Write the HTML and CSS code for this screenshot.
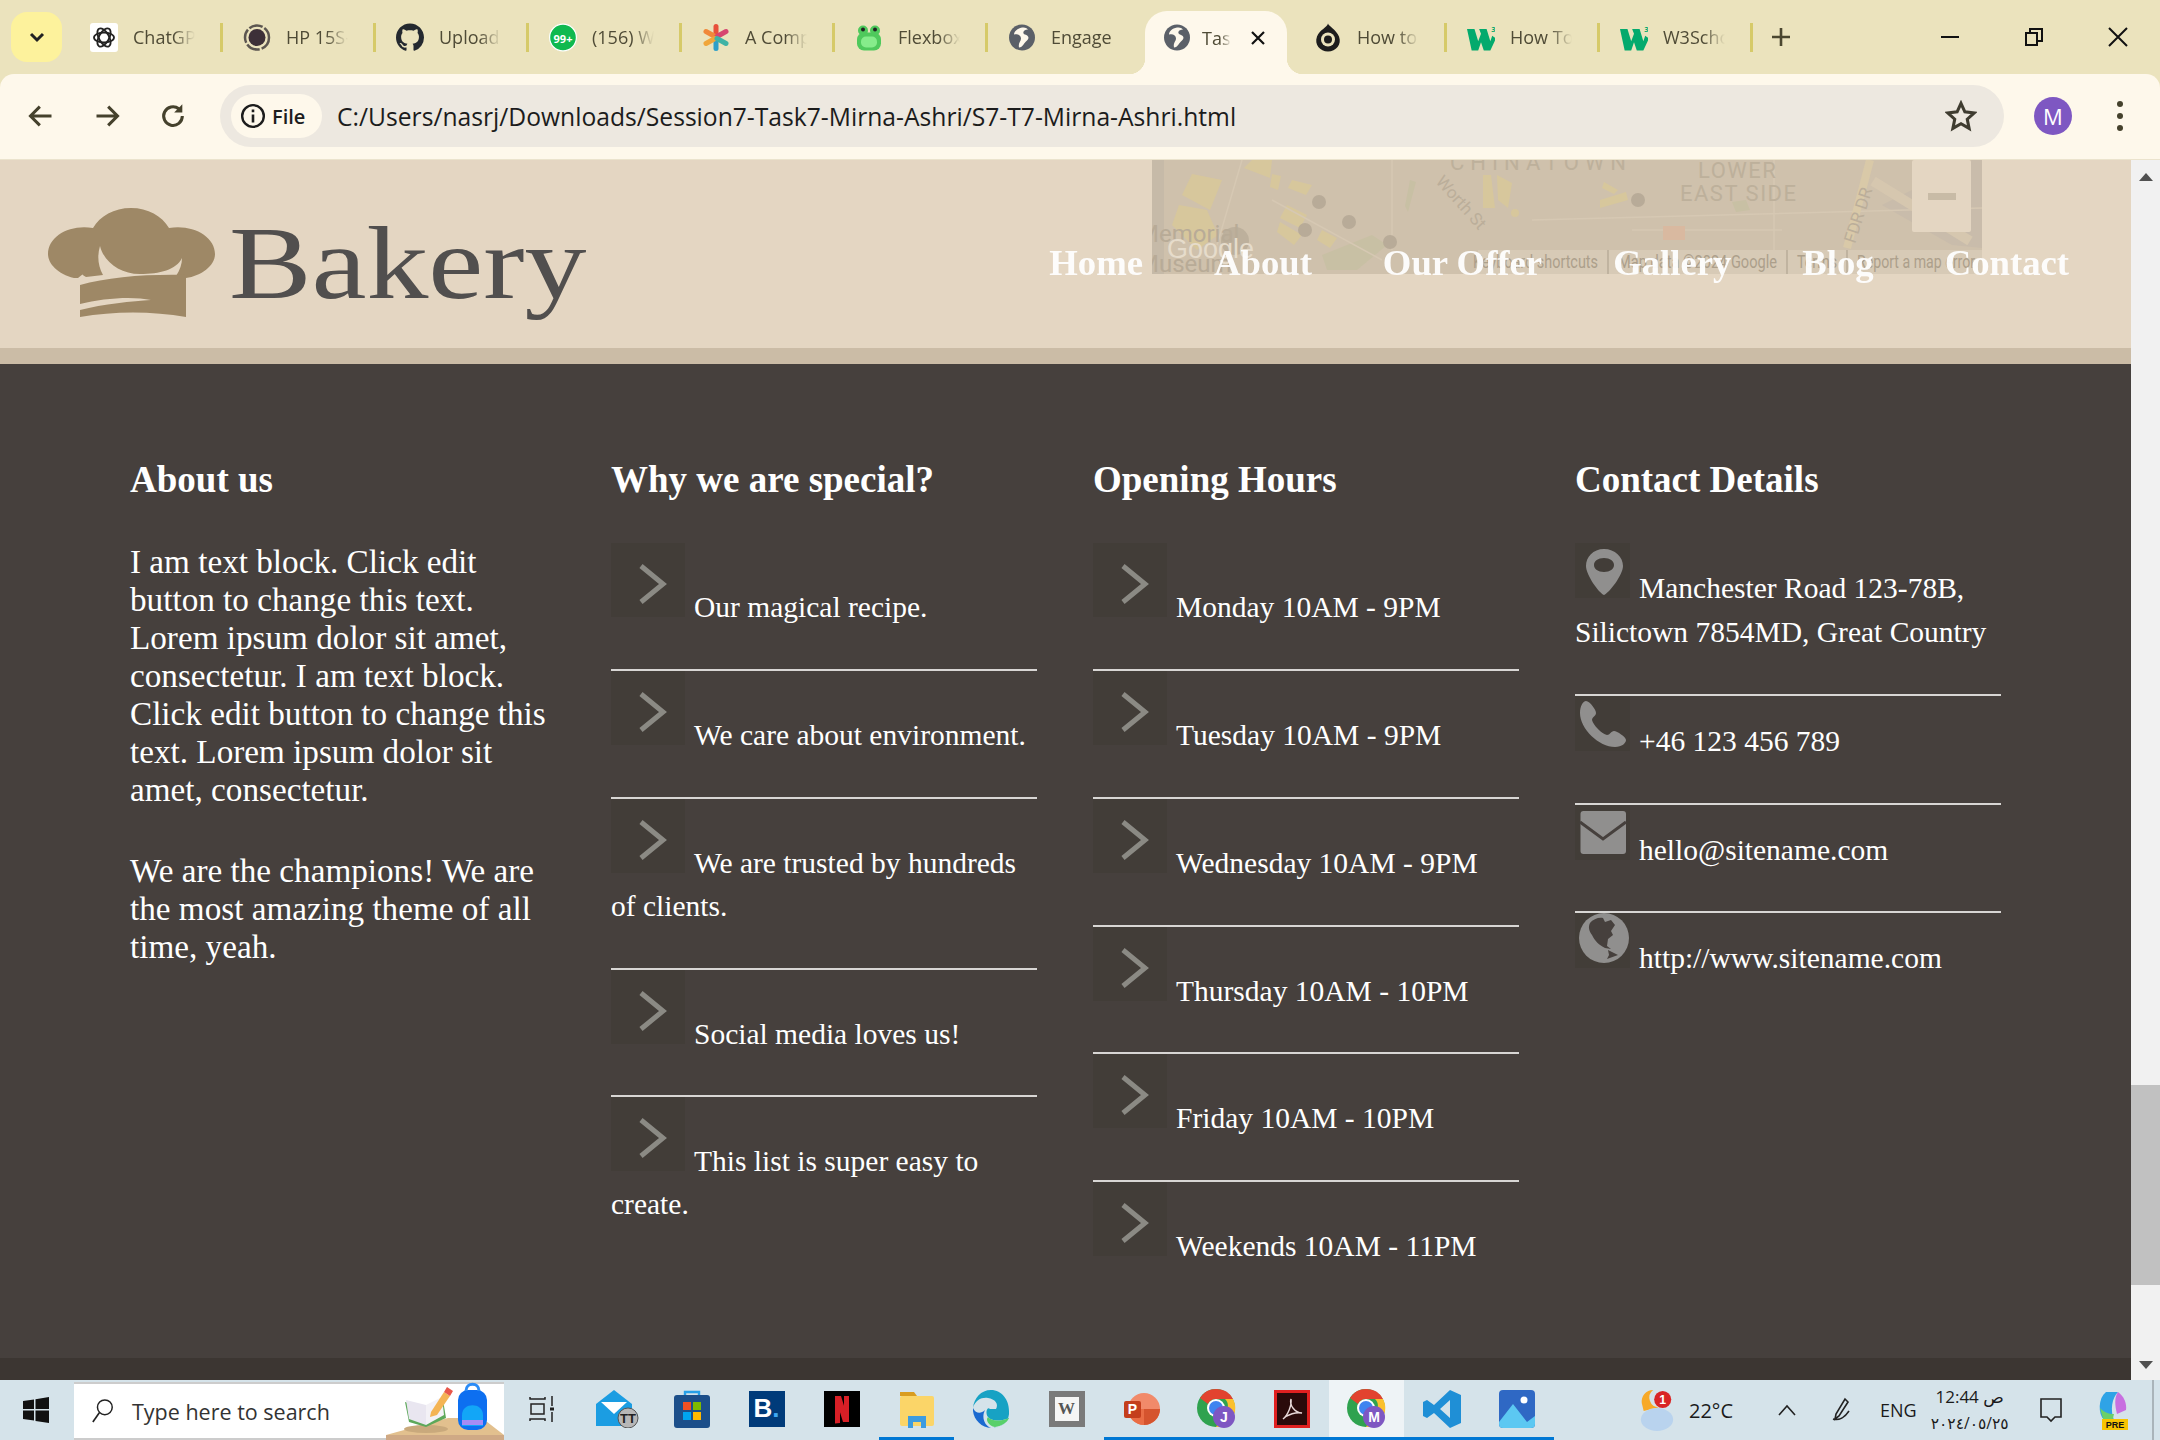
FILE: index.html
```html
<!DOCTYPE html>
<html lang="en">
<head>
    <meta charset="UTF-8">
    <meta name="viewport" content="width=device-width, initial-scale=1.0">
    <title>Task 7</title>
    <link rel="stylesheet" href="styles.css">
</head>
<body>
    <!-- browser tabs -->
    <div class="tabstrip">
        <button class="tab-menu"><svg viewBox="0 0 24 24" width="24" height="24"><path d="M6 9l6 6 6-6" fill="none" stroke="#222" stroke-width="3"/></svg></button>
        <div class="tab">
            <svg class="favicon" viewBox="0 0 28 29"><rect width="28" height="29" fill="#fff" rx="3"/><g fill="none" stroke="#222" stroke-width="1.8"><ellipse cx="14" cy="14.5" rx="10" ry="5"/><ellipse cx="14" cy="14.5" rx="10" ry="5" transform="rotate(60 14 14.5)"/><ellipse cx="14" cy="14.5" rx="10" ry="5" transform="rotate(120 14 14.5)"/></g></svg>
            <span class="tab-title">ChatGPT</span><i class="tab-sep"></i>
        </div>
        <div class="tab">
            <svg class="favicon" viewBox="0 0 28 28"><circle cx="14" cy="14" r="12" fill="none" stroke="#5c5650" stroke-width="2.5" stroke-dasharray="14 2"/><circle cx="14" cy="14" r="8.5" fill="#3d3038"/></svg>
            <span class="tab-title">HP 15S-fq</span><i class="tab-sep"></i>
        </div>
        <div class="tab">
            <svg class="favicon" viewBox="0 0 16 16"><path fill="#24292f" d="M8 0C3.58 0 0 3.58 0 8c0 3.54 2.29 6.53 5.47 7.59.4.07.55-.17.55-.38 0-.19-.01-.82-.01-1.49-2.01.37-2.53-.49-2.69-.94-.09-.23-.48-.94-.82-1.13-.28-.15-.68-.52-.01-.53.63-.01 1.08.58 1.23.82.72 1.21 1.87.87 2.33.66.07-.52.28-.87.51-1.07-1.78-.2-3.64-.89-3.64-3.95 0-.87.31-1.59.82-2.15-.08-.2-.36-1.02.08-2.12 0 0 .67-.21 2.2.82.64-.18 1.32-.27 2-.27.68 0 1.36.09 2 .27 1.53-1.04 2.2-.82 2.2-.82.44 1.1.16 1.92.08 2.12.51.56.82 1.27.82 2.15 0 3.07-1.87 3.75-3.65 3.95.29.25.54.73.54 1.48 0 1.07-.01 1.93-.01 2.2 0 .21.15.46.55.38A8.013 8.013 0 0016 8c0-4.42-3.58-8-8-8z"/></svg>
            <span class="tab-title">Upload files</span><i class="tab-sep"></i>
        </div>
        <div class="tab">
            <svg class="favicon" viewBox="0 0 28 28"><circle cx="14" cy="14" r="13.4" fill="#0fb94f" stroke="#fff" stroke-width="1.2"/><text x="14" y="19" class="badge-text">99+</text></svg>
            <span class="tab-title">(156) WhatsApp</span><i class="tab-sep"></i>
        </div>
        <div class="tab">
            <svg class="favicon" viewBox="0 0 28 28"><g stroke-width="5" stroke-linecap="round"><path d="M14 3v10" stroke="#e8503a"/><path d="M14 15v10" stroke="#2e9fc9"/><path d="M4 8l9 5" stroke="#f0883a"/><path d="M24 8l-9 5" stroke="#d6456f"/><path d="M4 20l9-5" stroke="#f0a63a"/><path d="M24 20l-9-5" stroke="#3fb3a5"/></g></svg>
            <span class="tab-title">A Complete Guide</span><i class="tab-sep"></i>
        </div>
        <div class="tab">
            <svg class="favicon" viewBox="0 0 28 28"><rect x="2" y="9" width="24" height="18" rx="7" fill="#4fc95c"/><circle cx="8" cy="7" r="5" fill="#4fc95c"/><circle cx="20" cy="7" r="5" fill="#4fc95c"/><circle cx="8" cy="6" r="2" fill="#222"/><circle cx="20" cy="6" r="2" fill="#222"/><rect x="6" y="13" width="16" height="11" rx="5" fill="#86ec8b"/></svg>
            <span class="tab-title">Flexbox Froggy</span><i class="tab-sep"></i>
        </div>
        <div class="tab">
            <svg class="favicon" viewBox="0 0 28 28"><use href="#globe-tab"/></svg>
            <span class="tab-title">Engage</span>
        </div>
        <div class="tab tab-active">
            <svg class="favicon" viewBox="0 0 28 28">
                <g id="globe-tab"><circle cx="14" cy="14" r="13" fill="#5b6068"/><path d="M14 4c-5 1-8 4-8 7 4-1 7 1 7 4s-3 4-2 9c4 0 5-5 8-7 3-3 1-5-2-6s-2-5 3-5c-2-2-4-2-6-2z" fill="#fef8eb"/></g>
            </svg>
            <span class="tab-title">Task 7</span>
            <svg class="tab-close" viewBox="0 0 16 16"><path d="M2 2l12 12M14 2L2 14" stroke="#111" stroke-width="2.2"/></svg>
        </div>
        <div class="tab">
            <svg class="favicon" viewBox="0 0 28 28"><path d="M14 0c1 3 8 6 11 13 3 8-3 15-11 15S0 21 3 13C6 6 13 4 14 0z" fill="#1d1d1d"/><circle cx="14" cy="16" r="7" fill="#ebe3bd"/><circle cx="14" cy="16" r="4" fill="#1d1d1d"/></svg>
            <span class="tab-title">How to center</span><i class="tab-sep"></i>
        </div>
        <div class="tab">
            <svg class="favicon" viewBox="0 0 30 28"><use href="#w3-icon"/></svg>
            <span class="tab-title">How To Create</span><i class="tab-sep"></i>
        </div>
        <div class="tab">
            <svg class="favicon" viewBox="0 0 30 28">
                <g id="w3-icon"><path d="M0 5h8l4 13 3-8-2-5h8l4 13 2-6 4 3-6 13h-7l-3-9-3 9H5z" fill="#04aa6d"/><text x="26" y="8" class="w3-sup">3</text></g>
            </svg>
            <span class="tab-title">W3Schools</span><i class="tab-sep"></i>
        </div>
        <svg class="tab-new" viewBox="0 0 20 20"><path d="M10 1v18M1 10h18" stroke="#4b4730" stroke-width="2.6"/></svg>
        <div class="window-controls">
            <svg viewBox="0 0 20 20"><path d="M1 10h18" stroke="#111" stroke-width="2"/></svg>
            <svg viewBox="0 0 20 20"><path d="M2 6h11v12H2zM6 6V2h12v12h-5" fill="none" stroke="#111" stroke-width="2"/></svg>
            <svg viewBox="0 0 20 20"><path d="M1 1l18 18M19 1L1 19" stroke="#111" stroke-width="2"/></svg>
        </div>
    </div>

    <!-- address bar -->
    <div class="toolbar">
        <svg class="tool-btn" viewBox="0 0 24 24"><path d="M21 12H4M11 4l-8 8 8 8" fill="none" stroke="#45412c" stroke-width="2.6"/></svg>
        <svg class="tool-btn" viewBox="0 0 24 24"><path d="M3 12h17M13 4l8 8-8 8" fill="none" stroke="#45412c" stroke-width="2.6"/></svg>
        <svg class="tool-btn" viewBox="0 0 24 24"><path d="M20 12a8 8 0 1 1-3-6.2" fill="none" stroke="#45412c" stroke-width="2.6"/><path d="M20 2v7h-7z" fill="#45412c"/></svg>
        <div class="omnibox">
            <div class="file-chip">
                <svg viewBox="0 0 24 24" width="26" height="26"><circle cx="12" cy="12" r="10" fill="none" stroke="#1d1d1d" stroke-width="2.2"/><path d="M12 10.5V18M12 6v2.6" stroke="#1d1d1d" stroke-width="2.4"/></svg>
                <span>File</span>
            </div>
            <span class="url">C:/Users/nasrj/Downloads/Session7-Task7-Mirna-Ashri/S7-T7-Mirna-Ashri.html</span>
            <svg class="star" viewBox="0 0 24 24"><path d="M12 2.5l2.9 6.4 7 .8-5.2 4.7 1.4 6.9-6.1-3.5-6.1 3.5 1.4-6.9-5.2-4.7 7-.8z" fill="none" stroke="#3f3c30" stroke-width="2.3"/></svg>
        </div>
        <div class="avatar">M</div>
        <div class="kebab"><i></i><i></i><i></i></div>
    </div>

    <div class="viewport">
        <div class="page">
            <header class="site-header">
                <!-- faded map that scrolled under the sticky header -->
                <svg class="map" viewBox="0 0 830 114">
                    <rect width="830" height="114" fill="#cfc1ac"/>
                    <path d="M0 0h12v114H0z" fill="#c6baa8"/>
                    <path d="M730 45L800 85 830 88V0H820z" fill="#c9bcab"/>
                    <g fill="#d7c79c">
                        <path d="M40 14l30 6-12 30-28-15z"/><path d="M27 45l28 5 11 25-21 15-25-25z"/><path d="M100 0h20l-2 18-26-10z"/><path d="M120 14l9 2-3 14-8-3z"/><path d="M140 20l20 5-6 10-18-7z"/><path d="M135 45l20 10-7 13-20-10z"/><path d="M128 62l22 13-8 10-17-13z"/><path d="M170 70l15 8-7 10-13-8z"/><path d="M331 15l8 0 4 33-12 0z"/><path d="M345 15l15 8-4 25-10-8z"/><circle cx="363" cy="53" r="4"/><path d="M448 40l26-8 2 8-28 8zM452 22l14 8-4 4-12-6z"/>
                    </g>
                    <g fill="#c8c0a4">
                        <path d="M258 20l6 2-8 30-3-6zM170 95l50-20 15 10-30 25-30 0zM580 42l14-2 4 10-14 2z"/>
                    </g>
                    <g fill="none" stroke="#d6c8b3" stroke-width="1.5">
                        <path d="M90 0L65 85M240 0v90M380 60L830 48M622 0v90M480 70h150M120 40L230 100"/>
                    </g>
                    <path d="M718 0L695 88" stroke="#d9c9a8" stroke-width="8"/>
                    <path d="M721 21L818 81" stroke="#d6c7af" stroke-width="10"/>
                    <circle cx="83" cy="81" r="14" fill="#bdb09c"/>
                    <g fill="#b8ab98">
                        <circle cx="167" cy="42" r="7"/><circle cx="153" cy="70" r="7"/><circle cx="197" cy="62" r="7"/><circle cx="238" cy="82" r="7"/><circle cx="486" cy="40" r="7"/>
                    </g>
                    <rect x="511" y="66" width="22" height="14" fill="#d9b9a0"/>
                    <text x="298" y="10" class="map-label map-label-wide">CHINATOWN</text>
                    <text x="546" y="18" class="map-label">LOWER</text>
                    <text x="528" y="41" class="map-label">EAST SIDE</text>
                    <text x="283" y="22" class="map-street" transform="rotate(48 283 22)">Worth St</text>
                    <text x="703" y="84" class="map-street" transform="rotate(-72 703 84)">FDR DR</text>
                    <text x="-14" y="82" class="map-place">Memorial</text>
                    <text x="-14" y="112" class="map-place">Museum</text>
                    <text x="15" y="98" class="map-google">Google</text>
                    <rect x="326" y="90" width="504" height="24" fill="#d7cab6"/>
                    <g class="map-small">
                        <text x="321" y="108" textLength="125" lengthAdjust="spacingAndGlyphs">Keyboard shortcuts</text>
                        <text x="466" y="108" textLength="159" lengthAdjust="spacingAndGlyphs">Map data ©2024 Google</text>
                        <text x="645" y="108" textLength="40" lengthAdjust="spacingAndGlyphs">Terms</text>
                        <text x="705" y="108" textLength="118" lengthAdjust="spacingAndGlyphs">Report a map error</text>
                    </g>
                    <path d="M456 90v24M635 90v24M695 90v24" stroke="#a99d8a" stroke-width="1"/>
                    <rect x="760" y="0" width="59" height="72" rx="2" fill="#e4d6c2"/>
                    <rect x="776" y="33" width="28" height="7" fill="#c8bba6"/>
                </svg>
                <div class="logo">
                    <svg class="logo-hat" viewBox="0 0 167 109">
                        <path fill="#9e8866" d="M83 0C66 0 52 8 45 20C22 16 0 28 0 46C0 56 10 66 26 70L30 70L35 66C30 60 27 55 26 50C28 58 32 66 38 69L55 67C50 58 49 48 52 38C56 54 72 66 92 66C112 66 128 62 134 50C134 56 132 62 128 68L138 70C153 68 167 58 167 46C167 28 144 16 121 20C114 8 100 0 83 0Z"/>
                        <path fill="#9e8866" d="M32 77C60 69 100 66 138 67V109C104 103 66 103 32 109V102C55 96 85 93 103 92C85 88 55 90 32 96Z"/>
                    </svg>
                    <span class="logo-text">Bakery</span>
                </div>
                <nav class="main-nav">
                    <a href="#">Home</a>
                    <a href="#">About</a>
                    <a href="#">Our Offer</a>
                    <a href="#">Gallery</a>
                    <a href="#">Blog</a>
                    <a href="#">Contact</a>
                </nav>
            </header>
            <div class="header-band"></div>

            <footer class="site-footer">
                <div class="footer-grid">
                    <section>
                        <h3>About us</h3>
                        <p>I am text block. Click edit button to change this text. Lorem ipsum dolor sit amet, consectetur. I am text block. Click edit button to change this text. Lorem ipsum dolor sit amet, consectetur.</p>
                        <p>We are the champions! We are the most amazing theme of all time, yeah.</p>
                    </section>
                    <section>
                        <h3>Why we are special?</h3>
                        <ul class="arrow-list">
                            <li><svg class="arrow-icon" viewBox="0 0 74 74"><path d="M30 23l22 18-22 18"/></svg>Our magical recipe.</li>
                            <li><svg class="arrow-icon" viewBox="0 0 74 74"><path d="M30 23l22 18-22 18"/></svg>We care about environment.</li>
                            <li><svg class="arrow-icon" viewBox="0 0 74 74"><path d="M30 23l22 18-22 18"/></svg>We are trusted by hundreds of clients.</li>
                            <li><svg class="arrow-icon" viewBox="0 0 74 74"><path d="M30 23l22 18-22 18"/></svg>Social media loves us!</li>
                            <li><svg class="arrow-icon" viewBox="0 0 74 74"><path d="M30 23l22 18-22 18"/></svg>This list is super easy to create.</li>
                        </ul>
                    </section>
                    <section>
                        <h3>Opening Hours</h3>
                        <ul class="arrow-list">
                            <li><svg class="arrow-icon" viewBox="0 0 74 74"><path d="M30 23l22 18-22 18"/></svg>Monday 10AM - 9PM</li>
                            <li><svg class="arrow-icon" viewBox="0 0 74 74"><path d="M30 23l22 18-22 18"/></svg>Tuesday 10AM - 9PM</li>
                            <li><svg class="arrow-icon" viewBox="0 0 74 74"><path d="M30 23l22 18-22 18"/></svg>Wednesday 10AM - 9PM</li>
                            <li><svg class="arrow-icon" viewBox="0 0 74 74"><path d="M30 23l22 18-22 18"/></svg>Thursday 10AM - 10PM</li>
                            <li><svg class="arrow-icon" viewBox="0 0 74 74"><path d="M30 23l22 18-22 18"/></svg>Friday 10AM - 10PM</li>
                            <li><svg class="arrow-icon" viewBox="0 0 74 74"><path d="M30 23l22 18-22 18"/></svg>Weekends 10AM - 11PM</li>
                        </ul>
                    </section>
                    <section>
                        <h3>Contact Details</h3>
                        <ul class="contact-list">
                            <li><svg class="contact-icon" viewBox="0 0 55 55"><path fill-rule="evenodd" d="M29 6C18 6 11 14 11 23C11 32 24 50 29 52C34 50 48 32 48 23C48 14 40 6 29 6ZM29 15C35 15 39 18 39 22C39 26 35 29 29 29C23 29 19 26 19 22C19 18 23 15 29 15Z"/></svg>Manchester Road 123-78B, Silictown 7854MD, Great Country</li>
                            <li><svg class="contact-icon" viewBox="0 0 55 55"><path d="M11 5C8 5 5 10 5 17C5 33 24 51 40 51C47 51 51 47 51 44C51 41 42 35 39 35C36 35 35 39 32 39C27 38 18 29 17 24C17 21 21 20 21 17C21 14 15 5 11 5Z"/></svg>+46 123 456 789</li>
                            <li><svg class="contact-icon" viewBox="0 0 55 55"><rect x="5.5" y="6" width="45.5" height="43" rx="3"/><path d="M5 17l23 17 23-17" fill="none" stroke="#46403d" stroke-width="3"/></svg>hello@sitename.com</li>
                            <li><svg class="contact-icon" viewBox="0 0 55 55"><circle cx="29" cy="25" r="25"/><path fill="#46403d" d="M15 10C18 6 24 4 28 5L30 9L36 7L40 12L36 18L38 22L33 26L32 33L36 36L30 35C24 32 20 28 17 22C14 18 13 14 15 10ZM33 37L43 42L32 46L34 42Z"/></svg>http://www.sitename.com</li>
                        </ul>
                    </section>
                </div>
                <div class="footer-bottom"></div>
            </footer>
        </div>
        <div class="scrollbar">
            <i class="scroll-up"></i>
            <div class="scroll-track"><div class="scroll-thumb"></div></div>
            <i class="scroll-down"></i>
        </div>
    </div>

    <!-- windows taskbar -->
    <div class="taskbar">
        <div class="start"><svg viewBox="0 0 26 26" width="26" height="26"><path fill="#111" d="M0 4l11-1.6V12H0zM12.5 2.2L26 0v12H12.5zM0 13.5h11v10L0 22zM12.5 13.5H26V26l-13.5-2z"/></svg></div>
        <div class="search">
            <svg viewBox="0 0 26 28" width="24" height="26"><circle cx="15" cy="10" r="8" fill="none" stroke="#222" stroke-width="1.6"/><path d="M9 16L2 26" stroke="#222" stroke-width="1.8"/></svg>
            <span>Type here to search</span>
            <svg class="search-art" viewBox="0 0 120 58">
                <path d="M2 58v-5L64 36h34l22 17v5z" fill="#e2c08e"/>
                <path d="M2 53h118v5H2z" fill="#cfa985"/>
                <ellipse cx="42" cy="47" rx="22" ry="4" fill="#c9a97c"/>
                <path d="M21 20L42 26 59 18 62 36 42 45 25 40z" fill="#5da85a"/>
                <path d="M22 18L42 23 42 43 25 37z" fill="#e9e6f0"/>
                <path d="M42 23L58 15 60 33 42 43z" fill="#f3f1f6"/>
                <path d="M47 30L60 10l6 4-13 19-7 2z" fill="#f4b454"/>
                <path d="M60 10l3-5 6 4-3 5z" fill="#e8574a"/>
                <rect x="74" y="8" width="29" height="40" rx="10" fill="#0d6ff0"/>
                <path d="M82 9c0-9 13-9 13 0" fill="none" stroke="#2a8cf7" stroke-width="3"/>
                <path d="M78 33c0-13 21-13 21 0v11H78z" fill="#12a6f7"/>
                <path d="M78 38h21v5H78z" fill="#a58cf5"/>
            </svg>
        </div>
        <div class="task-btn"><svg viewBox="0 0 26 26" width="26" height="26"><path d="M1 1v2h15V1M2 8h13v10H2zM1 25v-2h15v2M23 0v10M23 16v10" fill="none" stroke="#222" stroke-width="1.5"/><rect x="21" y="11.5" width="4" height="3" fill="#222"/></svg></div>
        <div class="task-btn"><svg viewBox="0 0 44 38" width="44" height="38"><path d="M1 14L19 0l18 14v22H1z" fill="#1b9de2"/><path d="M6 12h26L19 24z" fill="#fff"/><circle cx="33" cy="28" r="10" fill="#b7b7b7" stroke="#555"/><text x="33" y="33" class="mail-badge">TT</text></svg></div>
        <div class="task-btn"><svg viewBox="0 0 36 38" width="36" height="38"><path d="M11 6V2h14v4" fill="none" stroke="#27a0e8" stroke-width="2.4"/><rect y="5" width="36" height="33" rx="3" fill="#1c4f8a"/><rect x="9" y="12" width="8" height="8" fill="#f25022"/><rect x="19" y="12" width="8" height="8" fill="#7fba00"/><rect x="9" y="22" width="8" height="8" fill="#00a4ef"/><rect x="19" y="22" width="8" height="8" fill="#ffb900"/></svg></div>
        <div class="task-btn"><div class="tile tile-booking">B<span>.</span></div></div>
        <div class="task-btn"><svg viewBox="0 0 36 36" width="36" height="36"><rect width="36" height="36" fill="#000"/><path d="M11 5h6l8 26h-6zM11 5h5v27l-5 .6zM20 5h5v26h-5z" fill="#d81f26"/></svg></div>
        <div class="task-btn task-open"><svg viewBox="0 0 36 38" width="36" height="38"><path d="M1 2h14l3 4H1z" fill="#d99c1f"/><rect x="1" y="6" width="34" height="30" rx="2" fill="#fbd568"/><path d="M9 38V26h18v12h-5v-6h-8v6z" fill="#3d9ce0"/></svg></div>
        <div class="task-btn"><svg viewBox="0 0 38 38" width="38" height="38"><path d="M36 21C36 10 29 0 18 0C8 0 1 8 0 18C2 10 9 7 15 8C22 9 26 14 23 19H17C14 16 12 23 15 27C18 31 26 32 36 28C30 36 24 38 18 38C30 38 37 30 36 21Z" fill="#17a2c4"/><path d="M0 18C-1 28 8 38 18 38C12 36 8 28 12 20C8 24 3 24 0 18Z" fill="#1b6ad0"/><path d="M15 27C18 31 26 32 36 28C34 33 28 36 22 37C16 36 12 30 15 27Z" fill="#58d06a"/></svg></div>
        <div class="task-btn"><div class="tile tile-wiki"><span>W</span></div></div>
        <div class="task-btn task-open"><svg viewBox="0 0 36 38" width="36" height="38"><circle cx="20" cy="19" r="16" fill="#f18a6a"/><path d="M20 19h16a16 16 0 0 1-16 16z" fill="#d5542e"/><path d="M20 19v16a16 16 0 0 1-16-16z" fill="#e96d45"/><rect y="11" width="17" height="17" rx="2" fill="#c43e1c"/><text x="8.5" y="24" class="app-letter">P</text></svg></div>
        <div class="task-btn task-open"><svg viewBox="0 0 40 40" width="40" height="40"><use href="#chrome-icon"/><circle cx="27" cy="28" r="11" fill="#7e57c2"/><text x="27" y="33" class="app-letter">J</text></svg></div>
        <div class="task-btn task-open"><svg viewBox="0 0 36 38" width="36" height="38"><rect x="1.5" y="1.5" width="33" height="35" fill="#2a0a0a" stroke="#e02020" stroke-width="3"/><path d="M9 29c5-4 9-14 8-20-2 6 4 14 11 14-6-1-14 1-19 6z" fill="none" stroke="#e8d8d8" stroke-width="1.4"/></svg></div>
        <div class="task-btn task-active"><svg viewBox="0 0 40 40" width="40" height="40">
            <g id="chrome-icon"><circle cx="19" cy="19" r="19" fill="#2fa24f"/><path d="M19 0A19 19 0 0 1 36 10H19A9 9 0 0 0 11 15L3 9A19 19 0 0 1 19 0Z" fill="#e2432f"/><path d="M36 10A19 19 0 0 1 19 38L27 24A9 9 0 0 0 28 10Z" fill="#fbc02d"/><circle cx="19" cy="19" r="9" fill="#fff"/><circle cx="19" cy="19" r="7" fill="#3f84f0"/></g>
            <circle cx="27" cy="28" r="11" fill="#7e57c2"/><text x="27" y="33" class="app-letter">M</text></svg></div>
        <div class="task-btn task-open"><svg viewBox="0 0 38 38" width="38" height="38"><path d="M27 0l11 5v28l-11 5-16-15-7 5-4-2V12l4-2 7 5zM27 10l-10 9 10 9z" fill="#1f8fd6"/></svg></div>
        <div class="task-btn task-open"><svg viewBox="0 0 36 38" width="36" height="38"><rect width="36" height="38" rx="4" fill="#2f68c4"/><circle cx="25" cy="10" r="3.5" fill="#fff"/><path d="M0 32L14 14l14 18 8-6v8a4 4 0 0 1-4 4H4a4 4 0 0 1-4-4z" fill="#5cc8f2"/></svg></div>

        <div class="tray">
            <div class="weather">
                <svg viewBox="0 0 40 46" width="38" height="44"><path d="M4 16A12 12 0 0 1 16 2 10 10 0 0 0 22 20L6 24z" fill="#f7a928"/><ellipse cx="20" cy="33" rx="17" ry="12" fill="#b9d3ee"/><circle cx="26" cy="12" r="9" fill="#d92525"/><text x="26" y="17" class="weather-badge">1</text></svg>
                <span>22°C</span>
            </div>
            <svg class="tray-icon tray-chevron" viewBox="0 0 20 14"><path d="M2 12l8-9 8 9" fill="none" stroke="#222" stroke-width="1.6"/></svg>
            <svg class="tray-icon tray-pen" viewBox="0 0 22 26"><path d="M16 2l3 3-9 14-4 3 1-5zM4 22c6 2 12-2 16-8" fill="none" stroke="#222" stroke-width="1.6"/></svg>
            <span class="tray-lang">ENG</span>
            <div class="clock">
                <span>12:44 ص</span>
                <bdo class="clock-date" dir="ltr">٢٠٢٤/٠٥/٢٥</bdo>
            </div>
            <svg class="tray-icon tray-note" viewBox="0 0 24 26"><path d="M2 2h20v18h-6l-4 4-4-4H2z" fill="none" stroke="#222" stroke-width="1.6"/></svg>
            <svg class="tray-icon tray-copilot" viewBox="0 0 32 40"><path d="M10 2h12c-6 6-8 18-4 28H8C2 24 2 8 10 2z" fill="#2fa3e6"/><path d="M22 2c6 4 9 12 8 18l-9 4c-2-8-3-16 1-22z" fill="#c86fe0"/><path d="M4 18c4 4 8 6 14 6l-2 8H8z" fill="#6bd06a"/><rect x="6" y="29" width="26" height="11" fill="#f8c400"/><text x="19" y="38" class="pre-badge">PRE</text></svg>
            <i class="show-desktop"></i>
        </div>
    </div>
</body>
</html>
```

FILE: styles.css
```css
* {
    box-sizing: border-box;
}

body {
    margin: 0;
    height: 1440px;
    overflow: hidden;
    display: flex;
    flex-direction: column;
    font-family: "Liberation Serif", serif;
    background-color: #ebe3bd;
}

/* tab strip */
.tabstrip {
    height: 74px;
    flex: none;
    display: flex;
    align-items: center;
    background-color: #ebe3bd;
    padding-left: 11px;
    font-family: "Open Sans", sans-serif;
}

.tab-menu {
    width: 51px;
    height: 50px;
    margin-right: 8px;
    padding: 0;
    border: none;
    border-radius: 16px;
    background-color: #fdf29c;
    display: flex;
    align-items: center;
    justify-content: center;
}

.tab {
    width: 153px;
    height: 50px;
    padding-left: 20px;
    display: flex;
    align-items: center;
    gap: 15px;
    flex: none;
}

.favicon {
    width: 28px;
    height: 29px;
    flex: none;
}

.tab-title {
    flex: 1;
    min-width: 0;
    font-size: 18px;
    color: #4f4b36;
    white-space: nowrap;
    overflow: hidden;
    -webkit-mask-image: linear-gradient(to right, #000 65%, transparent 100%);
    mask-image: linear-gradient(to right, #000 65%, transparent 100%);
}

.tab-sep {
    width: 3px;
    height: 29px;
    flex: none;
    margin-left: 10px;
    background-color: #d6ca69;
}

.tab-active {
    position: relative;
    width: 142px;
    height: 63px;
    margin: 0 7px 0 4px;
    align-self: flex-end;
    padding: 0 21px 10px 18px;
    border-radius: 22px 22px 0 0;
    background-color: #fef8eb;
    gap: 11px;
}

.tab-active::before,
.tab-active::after {
    content: "";
    position: absolute;
    bottom: 0;
    width: 16px;
    height: 16px;
}

.tab-active::before {
    left: -16px;
    background: radial-gradient(circle at 0 0, transparent 16px, #fef8eb 16.5px);
}

.tab-active::after {
    right: -16px;
    background: radial-gradient(circle at 100% 0, transparent 16px, #fef8eb 16.5px);
}

.tab-close {
    width: 16px;
    height: 16px;
    flex: none;
    margin-left: 8px;
}

.badge-text {
    font-size: 11px;
    font-weight: 700;
    fill: #fff;
    text-anchor: middle;
}

.w3-sup {
    font-size: 8px;
    font-weight: 700;
    fill: #04aa6d;
}

.tab-new {
    width: 20px;
    height: 20px;
    margin-left: 18px;
}

.window-controls {
    margin-left: auto;
    display: flex;
    gap: 64px;
    padding-right: 32px;
}

.window-controls svg {
    width: 20px;
    height: 20px;
}

/* address bar */
.toolbar {
    height: 86px;
    flex: none;
    display: flex;
    align-items: center;
    padding: 0 0 1px 27px;
    background-color: #fef8eb;
    border-bottom: 1px solid #ebe3cd;
    border-radius: 14px 14px 0 0;
}

.tool-btn {
    width: 28px;
    height: 28px;
    margin-right: 38px;
    flex: none;
}

.omnibox {
    width: 1784px;
    height: 62px;
    margin-left: -5px;
    padding: 0 27px 0 11px;
    display: flex;
    align-items: center;
    border-radius: 31px;
    background-color: #ede8e0;
    font-family: "Open Sans", sans-serif;
}

.file-chip {
    width: 91px;
    height: 44px;
    padding-left: 9px;
    display: flex;
    align-items: center;
    gap: 6px;
    border-radius: 22px;
    background-color: #fef8eb;
    font-size: 20px;
    font-weight: 600;
    color: #1d1d1d;
}

.url {
    margin-left: 15px;
    font-size: 24.65px;
    color: #1c1c1c;
    white-space: nowrap;
}

.star {
    width: 32px;
    height: 32px;
    margin-left: auto;
}

.avatar {
    width: 38px;
    height: 38px;
    margin-left: 30px;
    border-radius: 50%;
    background-color: #7e57c2;
    color: #fff;
    font-family: "Open Sans", sans-serif;
    font-size: 22px;
    line-height: 38px;
    text-align: center;
}

.kebab {
    margin-left: 45px;
    display: flex;
    flex-direction: column;
    gap: 6px;
}

.kebab i {
    width: 6px;
    height: 6px;
    border-radius: 50%;
    background-color: #45412c;
}

/* page area */
.viewport {
    flex: 1;
    min-height: 0;
    display: flex;
}

.page {
    flex: 1;
    min-width: 0;
    display: flex;
    flex-direction: column;
}

.site-header {
    position: relative;
    height: 188px;
    flex: none;
    padding: 48px 62px 0 48px;
    display: flex;
    justify-content: space-between;
    background-color: #e4d6c2;
    overflow: hidden;
}

.map {
    position: absolute;
    left: 1152px;
    top: 0;
    width: 830px;
    height: 114px;
}

.map-label {
    font-family: "Roboto", sans-serif;
    font-size: 22px;
    fill: #bdb09b;
    letter-spacing: 1.5px;
}

.map-label-wide {
    letter-spacing: 6px;
}

.map-street {
    font-family: "Roboto", sans-serif;
    font-size: 17px;
    fill: #bbae9a;
}

.map-place {
    font-family: "Roboto", sans-serif;
    font-size: 24px;
    fill: #b8ab97;
}

.map-small {
    font-family: "Roboto", sans-serif;
    font-size: 18px;
    fill: #ac9f8b;
}

.map-google {
    font-family: "Liberation Sans", sans-serif;
    font-size: 27px;
    fill: #e6dccb;
}

.logo {
    position: relative;
    display: flex;
    align-items: flex-start;
}

.logo-hat {
    width: 167px;
    height: 109px;
    flex: none;
}

.logo-text {
    display: inline-block;
    margin-left: 14px;
    font-size: 104px;
    line-height: 110px;
    color: #514f4e;
    transform: scaleX(1.19);
    transform-origin: left center;
}

.main-nav {
    position: relative;
    display: flex;
    gap: 71px;
    padding-top: 33px;
}

.main-nav a {
    font-size: 36.7px;
    font-weight: 700;
    line-height: 44px;
    color: #fff;
    text-decoration: none;
    opacity: 0.95;
}

.header-band {
    height: 16px;
    flex: none;
    background-color: #cbbca6;
}

.site-footer {
    flex: 1;
    min-height: 0;
    display: flex;
    flex-direction: column;
    background-color: #46403d;
    color: #fff;
}

.footer-grid {
    flex: 1;
    padding: 94px 0 0 130px;
    display: grid;
    grid-template-columns: 425px repeat(3, 426px);
    column-gap: 56px;
}

.footer-bottom {
    height: 22px;
    background-color: #3c3632;
}

.site-footer h3 {
    margin: 0 0 41px;
    font-size: 37px;
    line-height: 44px;
    font-weight: 700;
}

.site-footer p {
    margin: 0 0 43px;
    font-size: 33.2px;
    line-height: 38px;
}

.arrow-list,
.contact-list {
    margin: 0;
    padding: 0;
    list-style: none;
    font-size: 29.5px;
    line-height: 43px;
}

.contact-list {
    line-height: 44px;
}

.arrow-list li {
    padding-bottom: 39.85px;
    border-bottom: 2px solid #d8d6d4;
}

.contact-list li {
    padding-bottom: 39.8px;
    border-bottom: 2px solid #d8d6d4;
}

.arrow-list li:last-child,
.contact-list li:last-child {
    border-bottom: none;
}

.arrow-icon {
    width: 74px;
    height: 74px;
    margin-right: 9px;
    background-color: #423d38;
}

.arrow-icon path {
    fill: none;
    stroke: #8b8a84;
    stroke-width: 5;
}

.contact-icon {
    width: 55px;
    height: 55px;
    margin-right: 9px;
    background-color: #423d38;
    fill: #908f8e;
}

/* scrollbar */
.scrollbar {
    width: 29px;
    flex: none;
    display: flex;
    flex-direction: column;
    align-items: center;
    background-color: #f1f1f1;
}

.scroll-up,
.scroll-down {
    width: 0;
    height: 0;
    flex: none;
    border-left: 7px solid transparent;
    border-right: 7px solid transparent;
}

.scroll-up {
    margin: 13px 0;
    border-bottom: 8px solid #505050;
}

.scroll-down {
    margin: 12px 0 11px;
    border-top: 8px solid #505050;
}

.scroll-track {
    flex: 1;
    width: 100%;
}

.scroll-thumb {
    height: 200px;
    margin-top: 891px;
    background-color: #c1c1c1;
}

/* taskbar */
.taskbar {
    height: 60px;
    flex: none;
    display: flex;
    align-items: center;
    background-color: #d5e3ea;
    font-family: "Open Sans", "DejaVu Sans", sans-serif;
    color: #1a1a1a;
}

.start {
    width: 74px;
    padding-left: 23px;
    display: flex;
}

.search {
    width: 430px;
    height: 58px;
    align-self: flex-end;
    padding-left: 17px;
    display: flex;
    align-items: center;
    gap: 17px;
    background-color: #fff;
    border-top: 2px solid #ccc;
    border-bottom: 2px solid #ccc;
    font-size: 21.5px;
    color: #333;
    position: relative;
}

.search-art {
    position: absolute;
    right: 0;
    bottom: -2px;
    width: 120px;
    height: 58px;
}

.task-btn {
    width: 75px;
    height: 60px;
    flex: none;
    display: flex;
    align-items: center;
    justify-content: center;
    border-bottom: 3px solid transparent;
}

.task-open {
    border-bottom-color: #0078d4;
}

.task-active {
    border-bottom-color: #0078d4;
    background-color: #eef3f6;
}

.tile {
    width: 36px;
    height: 36px;
    display: flex;
    align-items: center;
    justify-content: center;
    font-family: "Liberation Sans", sans-serif;
    font-weight: 700;
}

.tile-booking {
    background-color: #003b7a;
    color: #fff;
    font-size: 26px;
}

.tile-booking span {
    color: #3fa9f5;
}

.tile-wiki {
    background-color: #7a7a7a;
}

.tile-wiki span {
    width: 24px;
    height: 24px;
    background-color: #f5f5f5;
    color: #555;
    font-family: "Liberation Serif", serif;
    font-size: 17px;
    line-height: 24px;
    text-align: center;
}

.mail-badge,
.app-letter,
.weather-badge,
.pre-badge {
    font-family: "Liberation Sans", sans-serif;
    font-weight: 700;
    text-anchor: middle;
}

.mail-badge {
    font-size: 13px;
    fill: #222;
}

.app-letter {
    font-size: 14px;
    fill: #fff;
}

.weather-badge {
    font-size: 13px;
    fill: #fff;
}

.pre-badge {
    font-size: 9px;
    fill: #111;
}

.tray {
    flex: 1;
    height: 100%;
    display: flex;
    align-items: center;
    padding-left: 84px;
    font-size: 20px;
}

.weather {
    display: flex;
    align-items: center;
    gap: 13px;
    width: 139px;
}

.tray-icon {
    flex: none;
}

.tray-chevron {
    width: 20px;
    height: 14px;
}

.tray-pen {
    width: 22px;
    height: 26px;
    margin-left: 32px;
}

.tray-lang {
    margin-left: 29px;
    font-size: 18px;
}

.clock {
    width: 82px;
    margin-left: 12px;
    display: flex;
    flex-direction: column;
    align-items: center;
    font-size: 17px;
    line-height: 26px;
    white-space: nowrap;
}

.clock-date {
    font-size: 15.5px;
}

.tray-note {
    width: 24px;
    height: 26px;
    margin-left: 28px;
}

.tray-copilot {
    width: 32px;
    height: 40px;
    margin-left: 33px;
}

.show-desktop {
    width: 2px;
    height: 100%;
    margin-left: auto;
    margin-right: 6px;
    background-color: #aab4ba;
}
```
